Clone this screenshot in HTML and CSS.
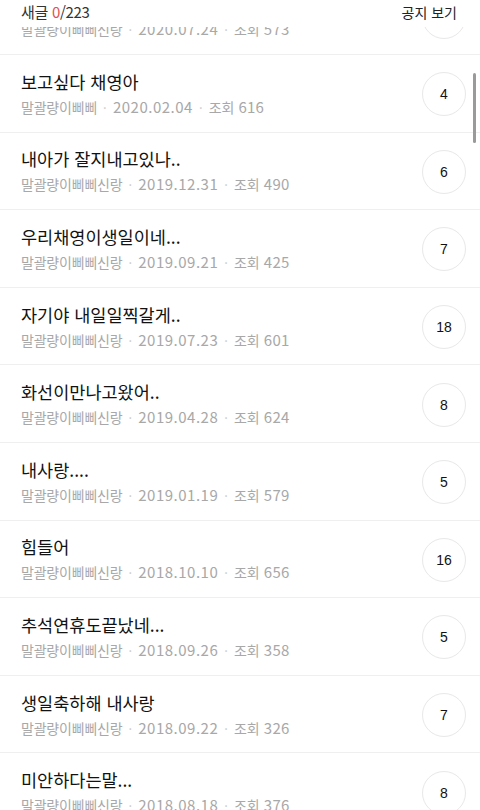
FILE: index.html
```html
<!DOCTYPE html>
<html lang="ko">
<head>
<meta charset="utf-8">
<link rel="stylesheet" href="styles.css">
</head>
<body>
<div class="screen">
  <header class="topbar">
    <div class="count">새글 <span class="new">0</span>/223</div>
    <div class="notice">공지 보기</div>
  </header>
  <ul class="list">
    <li class="row"><div class="text"><div class="title">보고싶다</div><div class="meta"><span class="author">말괄량이삐삐신랑</span><span class="dot">·</span><span class="date">2020.07.24</span><span class="dot">·</span><span class="author">조회</span> 573</div></div><div class="badge">3</div></li>
    <li class="row"><div class="text"><div class="title">보고싶다 채영아</div><div class="meta"><span class="author">말괄량이삐삐</span><span class="dot">·</span><span class="date">2020.02.04</span><span class="dot">·</span><span class="author">조회</span> 616</div></div><div class="badge">4</div></li>
    <li class="row"><div class="text"><div class="title">내아가 잘지내고있나..</div><div class="meta"><span class="author">말괄량이삐삐신랑</span><span class="dot">·</span><span class="date">2019.12.31</span><span class="dot">·</span><span class="author">조회</span> 490</div></div><div class="badge">6</div></li>
    <li class="row"><div class="text"><div class="title">우리채영이생일이네...</div><div class="meta"><span class="author">말괄량이삐삐신랑</span><span class="dot">·</span><span class="date">2019.09.21</span><span class="dot">·</span><span class="author">조회</span> 425</div></div><div class="badge">7</div></li>
    <li class="row"><div class="text"><div class="title">자기야 내일일찍갈게..</div><div class="meta"><span class="author">말괄량이삐삐신랑</span><span class="dot">·</span><span class="date">2019.07.23</span><span class="dot">·</span><span class="author">조회</span> 601</div></div><div class="badge">18</div></li>
    <li class="row"><div class="text"><div class="title">화선이만나고왔어..</div><div class="meta"><span class="author">말괄량이삐삐신랑</span><span class="dot">·</span><span class="date">2019.04.28</span><span class="dot">·</span><span class="author">조회</span> 624</div></div><div class="badge">8</div></li>
    <li class="row"><div class="text"><div class="title">내사랑....</div><div class="meta"><span class="author">말괄량이삐삐신랑</span><span class="dot">·</span><span class="date">2019.01.19</span><span class="dot">·</span><span class="author">조회</span> 579</div></div><div class="badge">5</div></li>
    <li class="row"><div class="text"><div class="title">힘들어</div><div class="meta"><span class="author">말괄량이삐삐신랑</span><span class="dot">·</span><span class="date">2018.10.10</span><span class="dot">·</span><span class="author">조회</span> 656</div></div><div class="badge">16</div></li>
    <li class="row"><div class="text"><div class="title">추석연휴도끝났네...</div><div class="meta"><span class="author">말괄량이삐삐신랑</span><span class="dot">·</span><span class="date">2018.09.26</span><span class="dot">·</span><span class="author">조회</span> 358</div></div><div class="badge">5</div></li>
    <li class="row"><div class="text"><div class="title">생일축하해 내사랑</div><div class="meta"><span class="author">말괄량이삐삐신랑</span><span class="dot">·</span><span class="date">2018.09.22</span><span class="dot">·</span><span class="author">조회</span> 326</div></div><div class="badge">7</div></li>
    <li class="row"><div class="text"><div class="title">미안하다는말...</div><div class="meta"><span class="author">말괄량이삐삐신랑</span><span class="dot">·</span><span class="date">2018.08.18</span><span class="dot">·</span><span class="author">조회</span> 376</div></div><div class="badge">8</div></li>
  </ul>
  <div class="scrollbar"></div>
</div>
</body>
</html>
```
FILE: styles.css
```css
* { box-sizing: border-box; }
html, body { margin: 0; padding: 0; background: #fff; }
body {
  font-family: "Noto Sans CJK KR", "Noto Sans", sans-serif;
  color: #1a1a1a;
}
.screen {
  position: relative;
  width: 480px;
  height: 810px;
  overflow: hidden;
  background: #fff;
}
.topbar {
  position: absolute;
  top: 0; left: 0; right: 0;
  height: 27px;
  background: #fff;
  z-index: 2;
  display: flex;
  justify-content: space-between;
  align-items: flex-start;
  padding: 2px 23px 0 21px;
  font-size: 15px;
  line-height: 20px;
}
.count { color: #333; letter-spacing: -0.3px; }
.count .new { color: #e3524d; }
.notice { color: #222; font-size: 14px; letter-spacing: 0; }
.list {
  list-style: none;
  margin: -22.6px 0 0 0;
  padding: 0;
}
.row {
  height: 77.6px;
  display: flex;
  align-items: center;
  justify-content: space-between;
  padding: 0 14px 0 21px;
  border-bottom: 1px solid #efefef;
}
.text { display: flex; flex-direction: column; padding-top: 0; }
.title {
  font-size: 17.5px;
  line-height: 24px;
  color: #121212;
  letter-spacing: 0;
}
.meta {
  margin-top: 4px;
  font-size: 15px;
  line-height: 18px;
  color: #a8a8a8;
  letter-spacing: 0.2px;
  white-space: nowrap;
}
.meta .author { font-size: 14px; letter-spacing: -0.2px; }
.meta .date { letter-spacing: 0.5px; }
.meta .dot { color: #c8c8c8; margin: 0 6px; font-size: 13px; }
.badge {
  width: 44px;
  height: 44px;
  border-radius: 50%;
  border: 1px solid #e8e8e8;
  display: flex;
  align-items: center;
  justify-content: center;
  font-family: "Liberation Sans", "Noto Sans", sans-serif;
  font-size: 14px;
  color: #111;
  margin-top: 2px;
}
.scrollbar {
  position: absolute;
  left: 473px;
  top: 73px;
  width: 3px;
  height: 70px;
  border-radius: 2px;
  background: #9a9a9a;
  z-index: 3;
}
```
